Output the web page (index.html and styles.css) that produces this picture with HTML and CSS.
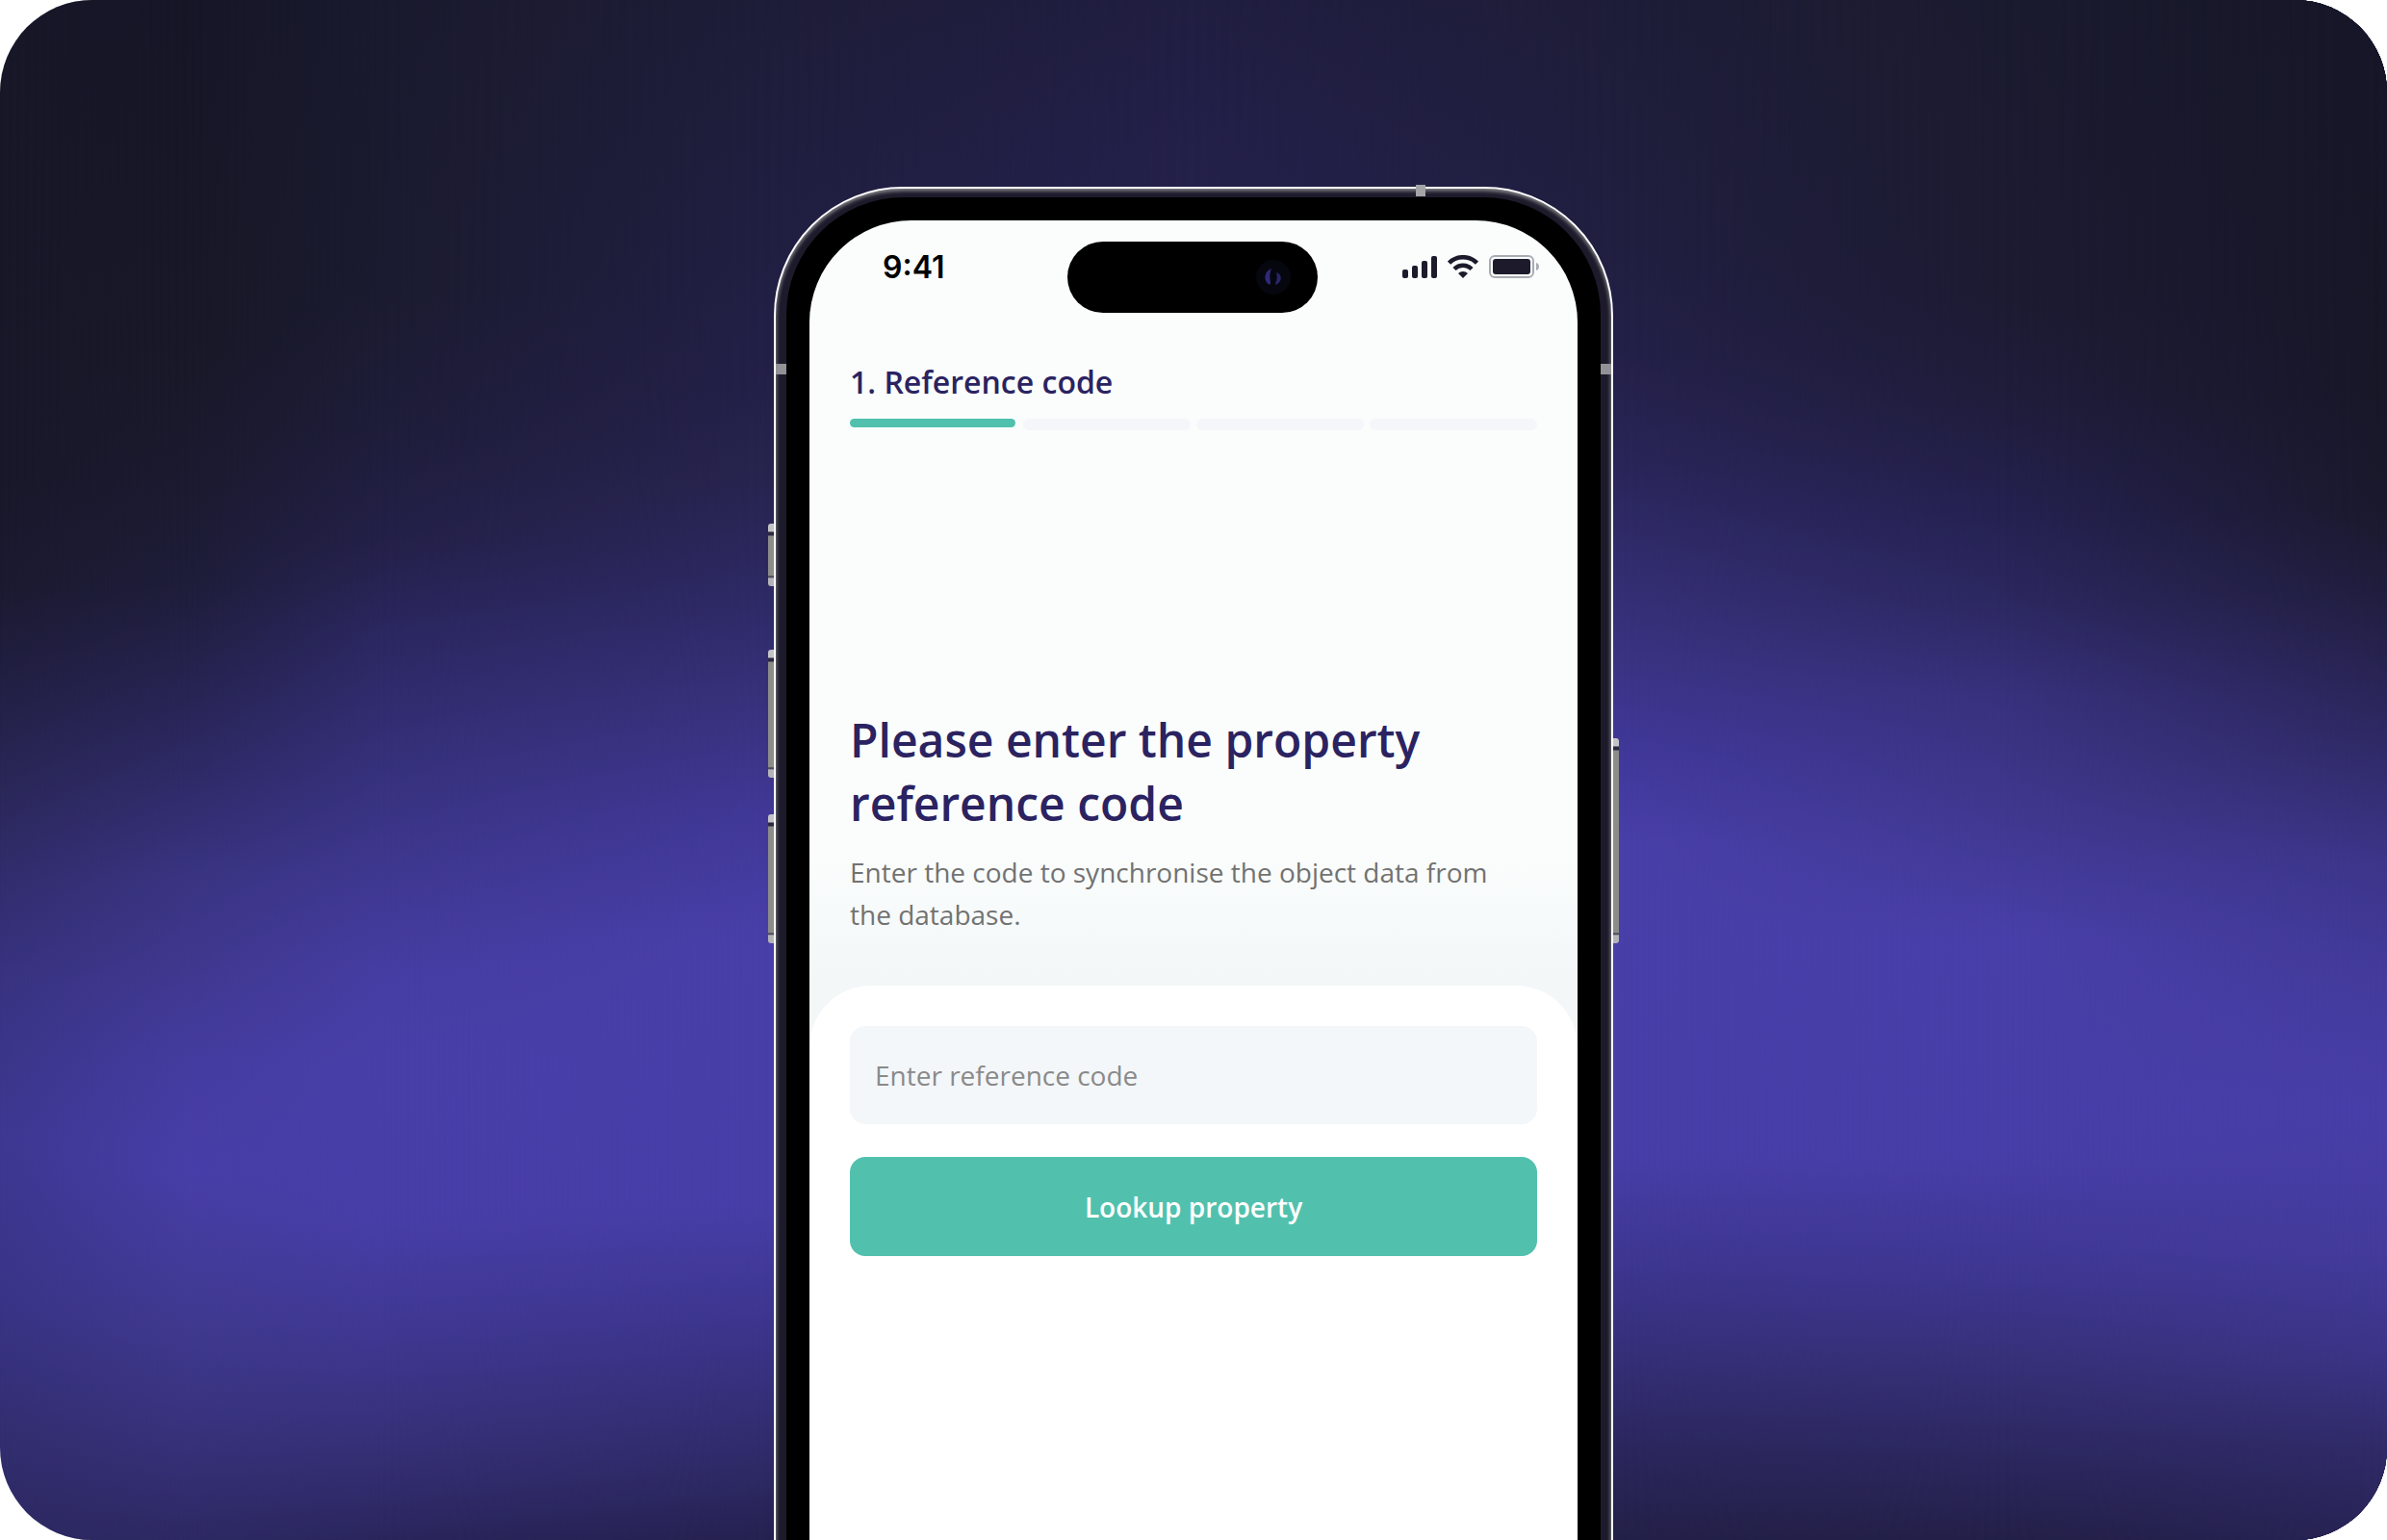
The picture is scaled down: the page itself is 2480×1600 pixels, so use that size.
FILE: index.html
```html
<!DOCTYPE html>
<html lang="en">
<head>
<meta charset="utf-8">
<meta name="viewport" content="width=device-width, initial-scale=1">
<title>Reference code</title>
<link rel="stylesheet" href="styles.css">
</head>
<body>
<main class="stage">
  <div class="backdrop" aria-hidden="true">
    <span class="glow glow-1"></span>
    <span class="glow glow-2"></span>
    <span class="glow glow-3"></span>
    <span class="glow glow-4"></span>
    <span class="glow glow-5"></span>
    <span class="glow glow-6"></span>
    <span class="glow glow-7"></span>
    <span class="glow glow-8"></span>
  </div>
  <div class="phone">
    <span class="key key-action"></span>
    <span class="key key-up"></span>
    <span class="key key-down"></span>
    <span class="key key-power"></span>
    <span class="band band-left"></span>
    <span class="band band-right"></span>
    <span class="band band-top"></span>
    <div class="bezel">
      <div class="screen">
        <header class="status">
          <span class="time">9:41</span>
          <span class="island">
            <svg width="36" height="36" viewBox="0 0 36 36" aria-hidden="true">
              <circle cx="18" cy="18" r="18" fill="#06060f"/>
              <path d="M16 9C8 12 7 22 14 26C17 24 12 18 16 9Z" fill="#2f2a78"/>
              <path d="M21 13C28 15 27 24 20 26C20 22 23 20 21 13Z" fill="#2a2568"/>
            </svg>
          </span>
          <span class="indicators">
            <svg width="36" height="24" viewBox="0 0 36 24" fill="#1c1a2b" aria-hidden="true">
              <rect x="0" y="15" width="6" height="9" rx="2"/>
              <rect x="10" y="11" width="6" height="13" rx="2"/>
              <rect x="20" y="6" width="6" height="18" rx="2"/>
              <rect x="30" y="1" width="6" height="23" rx="2"/>
            </svg>
            <svg width="32" height="24" viewBox="0 0 32 24" aria-hidden="true">
              <path d="M1.500 8.200C9.500 .2 22.500 .2 30.500 8.200" fill="none" stroke="#1c1a2b" stroke-width="4.500"/>
              <path d="M7 14.500C12 9.600 20 9.600 25 14.500" fill="none" stroke="#1c1a2b" stroke-width="4.500"/>
              <path d="M11 19C14 16.200 18 16.200 21 19L16 24Z" fill="#1c1a2b"/>
            </svg>
            <svg width="52" height="24" viewBox="0 0 52 24" aria-hidden="true">
              <rect x="1" y="1" width="45" height="22" rx="5" fill="none" stroke="#a9abb2" stroke-width="2"/>
              <rect x="4" y="4" width="39" height="16" rx="3" fill="#1c1a2b"/>
              <path d="M49 8C53 9 53 15 49 16Z" fill="#a9abb2"/>
            </svg>
          </span>
        </header>
        <section class="progress">
          <h2 class="step">1. Reference code</h2>
          <div class="track">
            <span class="segment done"></span>
            <span class="segment"></span>
            <span class="segment"></span>
            <span class="segment"></span>
          </div>
        </section>
        <section class="intro">
          <h1 class="title">Please enter the property reference code</h1>
          <p class="lead">Enter the code to synchronise the object data from the database.</p>
        </section>
        <form class="sheet">
          <input class="field" type="text" placeholder="Enter reference code" aria-label="Reference code">
          <button class="submit" type="button">Lookup property</button>
        </form>
      </div>
    </div>
  </div>
</main>
</body>
</html>
```
FILE: styles.css
```css
* {
  box-sizing: border-box;
}

body {
  margin: 0;
  background: #fff;
  font-family: "Open Sans", "Noto Sans", sans-serif;
}

h1, h2, p {
  margin: 0;
}

.stage {
  position: relative;
  isolation: isolate;
  display: flex;
  justify-content: center;
  height: 100vh;
  padding-top: 194px;
  overflow: hidden;
  border-radius: 96px;
}

/* Vertical colour profiles that fade into each other from left to right */
.backdrop {
  position: absolute;
  inset: 0;
  z-index: -1;
  display: grid;
}

.glow {
  grid-area: 1 / 1;
  mask-image: linear-gradient(90deg, transparent var(--from), #000 var(--to));
}

.glow-1 {
  --from: -1%;
  --to: 0%;
  background: linear-gradient(#171728 0%, #18182a 31%, #1b1a30 38%, #211f42 44%, #2a2758 51%, #332e70 58%, #393382 64%, #3e3892 74%, #3a3488 84%, #332e70 93%, #2c2860 100%);
}

.glow-2 {
  --from: 0%;
  --to: 8%;
  background: linear-gradient(#161628 0%, #181828 22%, #1b1a2f 31%, #1e1d3a 38%, #262350 44%, #2e2a66 50%, #3a3482 57%, #40388f 63%, #453ca0 69%, #483ea8 76%, #40398f 86%, #39337f 92%, #322d6e 97%, #2d2963 100%);
}

.glow-3 {
  --from: 8%;
  --to: 16%;
  background: linear-gradient(#1a1a2e 0%, #1b1b30 19%, #1e1d3a 28%, #232048 35%, #2b2760 41%, #342f76 48%, #3d368b 55%, #463da2 63%, #493fa9 69%, #483ea8 79%, #3f3790 87%, #37317a 93%, #302b6a 97%, #2a265c 100%);
}

.glow-4 {
  --from: 16%;
  --to: 32%;
  background: linear-gradient(#1e1d38 0%, #201f42 16%, #232048 25%, #27244f 31%, #2e2a66 39%, #37317a 45%, #413897 53%, #493fa9 61%, #483ea8 78%, #3e3690 85%, #352f78 91%, #2d2963 96%, #252150 100%);
}

.glow-5 {
  --from: 32%;
  --to: 50%;
  background: linear-gradient(#201e41 0%, #23204a 10%, #26234f 25%, #3a3383 45%, #493fa9 58%, #483ea8 75%, #252150 100%);
}

.glow-6 {
  --from: 50%;
  --to: 68%;
  background: linear-gradient(#1e1d38 0%, #201f40 16%, #232048 23%, #292558 30%, #312c6c 36%, #3a3383 43%, #41389a 49%, #493fa9 55%, #483ea8 75%, #3e3690 82%, #352f78 88%, #2b275d 94%, #232048 100%);
}

.glow-7 {
  --from: 68%;
  --to: 84%;
  background: linear-gradient(#1b1b2f 0%, #1c1b32 19%, #1f1d3b 26%, #242150 33%, #2c2860 39%, #37317c 45%, #40388f 53%, #493fa9 61%, #483ea8 75%, #3e3690 83%, #37317a 88%, #2b275d 95%, #232048 100%);
}

.glow-8 {
  --from: 84%;
  --to: 100%;
  background: linear-gradient(#161628 0%, #171728 25%, #1a192c 33%, #1f1d3c 38%, #272350 43%, #302b68 49%, #3c3589 56%, #443b9c 64%, #483ea8 72%, #443b9c 81%, #3b3486 88%, #302b68 94%, #272354 100%);
}

.phone {
  position: relative;
  flex: none;
  width: 872px;
  height: 1800px;
  padding: 9px 11px;
  border: 2px solid #fff;
  border-radius: 134px;
  background: #1d1b2b;
  box-shadow: inset 0 2px 4px #8a898c, inset 0 0 4px #4b4a58;
}

.bezel {
  height: 100%;
  padding: 24px;
  border-radius: 122px;
  background: #000;
}

.screen {
  display: flex;
  flex-direction: column;
  height: 100%;
  overflow: hidden;
  border-radius: 106px;
  background: linear-gradient(#fafdfc 0, #fafdfc 660px, #f3f7f8 790px);
}

.key {
  position: absolute;
  left: -8px;
  width: 6px;
  border-radius: 3px 0 0 3px;
  background: linear-gradient(#c4c4c8 0, #c4c4c8 8px, #2a2940 9px, #2a2940 12px, #8c8c89 13px, #8c8c89 calc(100% - 11px), #2a2940 calc(100% - 10px), #b4b4b8 calc(100% - 8px));
}

.key-action { top: 348px; height: 65px; }
.key-up { top: 479px; height: 133px; }
.key-down { top: 650px; height: 134px; }

.key-power {
  top: 571px;
  right: -8px;
  left: auto;
  height: 213px;
  border-radius: 0 3px 3px 0;
}

.band {
  position: absolute;
  width: 11px;
  height: 11px;
  background: #929296;
}

.band-left { top: 182px; left: 0; }
.band-right { top: 182px; right: 0; }
.band-top { top: -4px; right: 193px; width: 10px; height: 12px; background: #a4a4a6; }

.status {
  display: grid;
  grid-template-columns: 1fr 260px 1fr;
  padding: 22px 40px 0 38px;
}

.time {
  padding: 11px 0 0 38px;
  color: #000;
  font: 600 32px/32px Inter, sans-serif;
}

.island {
  display: flex;
  align-items: center;
  justify-content: flex-end;
  height: 74px;
  padding-right: 28px;
  border-radius: 37px;
  background: #000;
}

.indicators {
  display: flex;
  gap: 11px;
  justify-content: flex-end;
  padding-top: 14px;
}

.progress {
  padding: 50px 42px 0;
}

.step {
  color: #2b2361;
  font-size: 32px;
  font-weight: 600;
  line-height: 44px;
}

.track {
  display: grid;
  grid-template-columns: repeat(4, 1fr);
  gap: 6px;
  margin-top: 16px;
}

.segment {
  height: 12px;
  border-radius: 6px;
  background: #f4f7f9;
}

.done {
  width: 172px;
  height: 9px;
  background: #51c1ae;
}

.intro {
  padding: 289px 72px 0 42px;
}

.title {
  color: #2b2361;
  font-size: 48px;
  font-weight: 600;
  line-height: 66px;
}

.lead {
  margin-top: 16px;
  color: #727271;
  font-size: 28px;
  line-height: 44px;
}

.sheet {
  display: flex;
  flex: 1;
  flex-direction: column;
  gap: 34px;
  margin-top: 52px;
  padding: 42px;
  border-radius: 64px 64px 0 0;
  background: #fff;
}

.field {
  width: 100%;
  height: 102px;
  padding: 0 26px;
  border: 0;
  border-radius: 16px;
  background: #f4f7f9;
  color: #2b2361;
  font-family: inherit;
  font-size: 28px;
}

.field::placeholder {
  color: #8a8a8a;
  opacity: 1;
}

.submit {
  height: 103px;
  border: 0;
  border-radius: 16px;
  background: #51c1ae;
  color: #fff;
  font-family: inherit;
  font-size: 28px;
  font-weight: 600;
}
```
